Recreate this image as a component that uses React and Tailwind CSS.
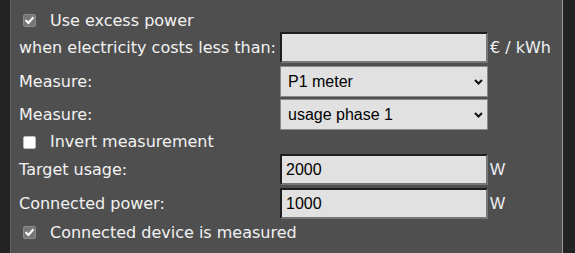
import React from "react";

const labelFont = { fontFamily: '"DejaVu Sans", sans-serif' };

function Check({ checked }) {
  if (checked) {
    return (
      <span className="flex h-[13px] w-[13px] shrink-0 items-center justify-center rounded-[2px] border border-[#8c8c8c] bg-[#767676]">
        <svg width="11" height="11" viewBox="0 0 11 11">
          <path d="M2.2 5.8 L4.4 8 L8.8 3" fill="none" stroke="#ffffff" strokeWidth="2" strokeLinecap="square" />
        </svg>
      </span>
    );
  }
  return <span className="block h-[13px] w-[13px] shrink-0 rounded-[2px] border border-[#bdbdbd] bg-white" />;
}

function CheckRow({ checked, text, h }) {
  return (
    <div className={`flex items-center ${h}`}>
      <span className="ml-[4px] block">
        <Check checked={checked} />
      </span>
      <span className="ml-[14px] text-[16px] leading-none text-[#f2f2f2] font-['DejaVu_Sans',sans-serif]">{text}</span>
    </div>
  );
}

function Label({ children }) {
  return (
    <span className="w-[261px] shrink-0 text-[16px] leading-none text-[#f2f2f2] font-['DejaVu_Sans',sans-serif]">
      {children}
    </span>
  );
}

function TextInput({ value }) {
  return (
    <div className="flex h-[31px] w-[208px] shrink-0 items-center border-2 border-t-[#1e1e1e] border-l-[#1e1e1e] border-b-[#767676] border-r-[#767676] bg-[#e1e1e1] pl-[4px] text-[16px] leading-none text-black font-['Liberation_Sans',sans-serif]">
      {value}
    </div>
  );
}

function Select({ value }) {
  return (
    <div className="relative flex h-[31px] w-[208px] shrink-0 items-center border border-[#8a8a8a] bg-[#e1e1e1] pl-[7px] text-[16px] leading-none text-black font-['Liberation_Sans',sans-serif]">
      <span>{value}</span>
      <svg className="absolute right-[4px] top-[12px]" width="9" height="6" viewBox="0 0 9 6">
        <path d="M1 1 L4.5 4.5 L8 1" fill="none" stroke="#111" strokeWidth="2" />
      </svg>
    </div>
  );
}

function Unit({ children, wide }) {
  return (
    <span
      className={`ml-[2px] text-[16px] leading-none text-[#eef2f6] ${
        wide ? "font-['DejaVu_Sans',sans-serif]" : "font-['Liberation_Sans',sans-serif]"
      }`}
    >
      {children}
    </span>
  );
}

export default function App() {
  return (
    <div className="flex h-[253px] w-[575px] overflow-hidden bg-[#232323]" style={labelFont}>
      <div className="w-[10px] shrink-0 bg-[#232323]" />
      <div className="flex-1 border-l border-r border-l-[#626262] border-r-[#9a9a9a] bg-[#4f4f4f] pl-[8px] pt-[9px]">
        <CheckRow checked text="Use excess power" h="h-[23px]" />
        <div className="flex h-[31px] items-center">
          <Label>when electricity costs less than:</Label>
          <TextInput value="" />
          <Unit wide>€ / kWh</Unit>
        </div>
        <div className="mt-[3px] flex h-[31px] items-center">
          <Label>Measure:</Label>
          <Select value="P1 meter" />
        </div>
        <div className="mt-[2px] flex h-[31px] items-center">
          <Label>Measure:</Label>
          <Select value="usage phase 1" />
        </div>
        <CheckRow checked={false} text="Invert measurement" h="h-[24px]" />
        <div className="flex h-[31px] items-center">
          <Label>Target usage:</Label>
          <TextInput value="2000" />
          <Unit>W</Unit>
        </div>
        <div className="mt-[3px] flex h-[31px] items-center">
          <Label>Connected power:</Label>
          <TextInput value="1000" />
          <Unit>W</Unit>
        </div>
        <CheckRow checked text="Connected device is measured" h="h-[27px]" />
      </div>
      <div className="w-[12px] shrink-0 bg-[#232323]" />
    </div>
  );
}
